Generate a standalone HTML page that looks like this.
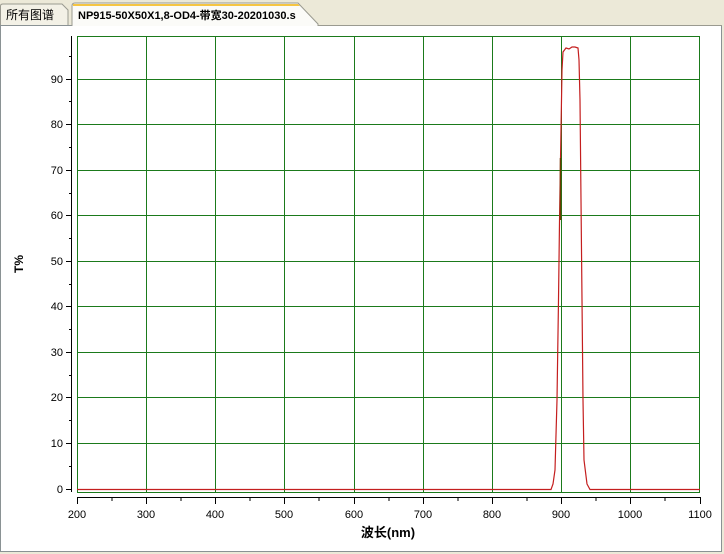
<!DOCTYPE html>
<html><head><meta charset="utf-8"><style>
body{margin:0;width:724px;height:554px;overflow:hidden;background:#ece9d8;font-family:"Liberation Sans","Noto Sans CJK SC",sans-serif}
</style></head><body>
<svg width="724" height="554" xmlns="http://www.w3.org/2000/svg" style="position:absolute;left:0;top:0">
<rect x="0" y="0" width="724" height="554" fill="#ece9d8"/>
<rect x="0.5" y="25.5" width="721" height="526" fill="#fff" stroke="#8a9294"/>
<!-- tabs -->
<path d="M0.5 25 L0.5 6 Q0.5 4 3 4 L62 4 L68 10 L68 25" fill="#f3f1e6" stroke="#9a9a90"/>
<text x="6" y="19" font-size="12" fill="#000">所有图谱</text>
<path d="M72 26 L72 6 Q72 3 75 3 L298 3 L318 24 L318 26" fill="#fbfbf8" stroke="#9a9a90"/>
<path d="M73 4 L298 4 L300 6 L73 6 Z" fill="#f5c542"/>
<text x="78" y="19" font-size="11" font-weight="bold" fill="#000">NP915-50X50X1,8-OD4-带宽30-20201030.s</text>
<line x1="318" y1="25.5" x2="722" y2="25.5" stroke="#9a9a90"/>
<!-- plot grid -->
<g stroke="#1b7a1b" stroke-width="1" fill="none">
<rect x="77.5" y="36.5" width="622" height="456"/>
<line x1="146.5" y1="36" x2="146.5" y2="492"/><line x1="215.5" y1="36" x2="215.5" y2="492"/><line x1="284.5" y1="36" x2="284.5" y2="492"/><line x1="354.5" y1="36" x2="354.5" y2="492"/><line x1="423.5" y1="36" x2="423.5" y2="492"/><line x1="492.5" y1="36" x2="492.5" y2="492"/><line x1="561.5" y1="36" x2="561.5" y2="492"/><line x1="630.5" y1="36" x2="630.5" y2="492"/>
<line x1="77" y1="79.5" x2="700" y2="79.5"/><line x1="77" y1="124.5" x2="700" y2="124.5"/><line x1="77" y1="170.5" x2="700" y2="170.5"/><line x1="77" y1="215.5" x2="700" y2="215.5"/><line x1="77" y1="261.5" x2="700" y2="261.5"/><line x1="77" y1="306.5" x2="700" y2="306.5"/><line x1="77" y1="352.5" x2="700" y2="352.5"/><line x1="77" y1="397.5" x2="700" y2="397.5"/><line x1="77" y1="443.5" x2="700" y2="443.5"/>
</g>
<!-- curve -->
<path d="M77 489.5 L551 489.5 L553 484 L555 470 L557 400 L558.5 300 L559.5 222 L560.5 160 L561.5 100 L562 70 L563 52 L566 48 L569 49 L572 47 L575 47 L578 48 L579 60 L580 100 L581 200 L582 300 L583 400 L584 460 L587 484 L590 489.5 L700 489.5" fill="none" stroke="#c41e1e" stroke-width="1.2"/>
<line x1="560.5" y1="158" x2="560.5" y2="220" stroke="#6a3a00" stroke-width="1.5"/>
<!-- axes -->
<g stroke="#000" stroke-width="1">
<line x1="71.5" y1="36" x2="71.5" y2="492"/>
<line x1="66" y1="489.5" x2="72" y2="489.5"/><line x1="66" y1="443.5" x2="72" y2="443.5"/><line x1="66" y1="397.5" x2="72" y2="397.5"/><line x1="66" y1="352.5" x2="72" y2="352.5"/><line x1="66" y1="306.5" x2="72" y2="306.5"/><line x1="66" y1="261.5" x2="72" y2="261.5"/><line x1="66" y1="215.5" x2="72" y2="215.5"/><line x1="66" y1="170.5" x2="72" y2="170.5"/><line x1="66" y1="124.5" x2="72" y2="124.5"/><line x1="66" y1="79.5" x2="72" y2="79.5"/>
<line x1="69" y1="466.5" x2="72" y2="466.5"/><line x1="69" y1="420.5" x2="72" y2="420.5"/><line x1="69" y1="375.5" x2="72" y2="375.5"/><line x1="69" y1="329.5" x2="72" y2="329.5"/><line x1="69" y1="284.5" x2="72" y2="284.5"/><line x1="69" y1="238.5" x2="72" y2="238.5"/><line x1="69" y1="193.5" x2="72" y2="193.5"/><line x1="69" y1="147.5" x2="72" y2="147.5"/><line x1="69" y1="101.5" x2="72" y2="101.5"/><line x1="69" y1="56.5" x2="72" y2="56.5"/>
<line x1="77" y1="497.5" x2="701" y2="497.5"/>
<line x1="77.5" y1="497" x2="77.5" y2="504"/><line x1="146.5" y1="497" x2="146.5" y2="504"/><line x1="215.5" y1="497" x2="215.5" y2="504"/><line x1="284.5" y1="497" x2="284.5" y2="504"/><line x1="354.5" y1="497" x2="354.5" y2="504"/><line x1="423.5" y1="497" x2="423.5" y2="504"/><line x1="492.5" y1="497" x2="492.5" y2="504"/><line x1="561.5" y1="497" x2="561.5" y2="504"/><line x1="630.5" y1="497" x2="630.5" y2="504"/><line x1="700.5" y1="497" x2="700.5" y2="504"/>
<line x1="112" y1="497" x2="112" y2="501"/><line x1="181" y1="497" x2="181" y2="501"/><line x1="250" y1="497" x2="250" y2="501"/><line x1="319" y1="497" x2="319" y2="501"/><line x1="389" y1="497" x2="389" y2="501"/><line x1="458" y1="497" x2="458" y2="501"/><line x1="527" y1="497" x2="527" y2="501"/><line x1="596" y1="497" x2="596" y2="501"/><line x1="665" y1="497" x2="665" y2="501"/>
</g>
<g font-size="11" fill="#000" text-anchor="end">
<text x="63" y="493">0</text><text x="63" y="447">10</text><text x="63" y="401">20</text><text x="63" y="356">30</text><text x="63" y="310">40</text><text x="63" y="265">50</text><text x="63" y="219">60</text><text x="63" y="174">70</text><text x="63" y="128">80</text><text x="63" y="83">90</text>
</g>
<g font-size="11" fill="#000" text-anchor="middle">
<text x="77" y="518">200</text><text x="146" y="518">300</text><text x="215" y="518">400</text><text x="284" y="518">500</text><text x="354" y="518">600</text><text x="423" y="518">700</text><text x="492" y="518">800</text><text x="561" y="518">900</text><text x="630" y="518">1000</text><text x="700" y="518">1100</text>
</g>
<text x="388" y="537" font-size="13" font-weight="bold" text-anchor="middle">波长(nm)</text>
<text transform="translate(23,264) rotate(-90)" font-size="12" font-weight="bold" text-anchor="middle">T%</text>
</svg>
</body></html>
